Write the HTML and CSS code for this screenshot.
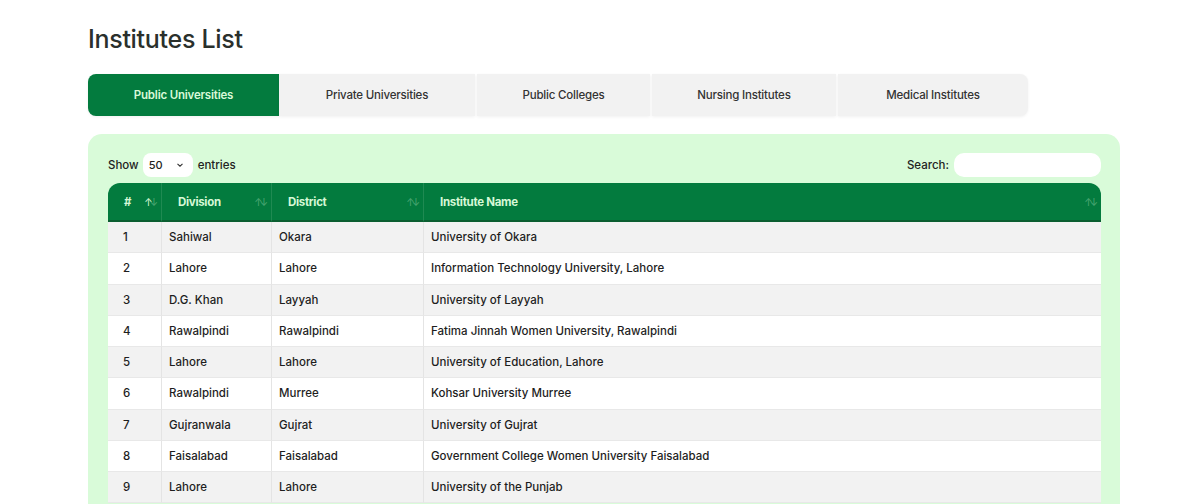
FILE: index.html
```html
<!DOCTYPE html>
<html>
<head>
<meta charset="utf-8">
<link rel="stylesheet" href="styles.css">
</head>
<body>
<div class="page">
  <h1 class="title">Institutes List</h1>
  <div class="tabs">
    <div class="tab active">Public Universities</div>
    <div class="tab">Private Universities</div>
    <div class="tab">Public Colleges</div>
    <div class="tab">Nursing Institutes</div>
    <div class="tab last">Medical Institutes</div>
  </div>
  <div class="panel">
    <div class="controls">
      <div class="length">Show <span class="select">50 <svg width="10" height="10" viewBox="0 0 10 10"><path d="M2.5 3.8 L5 6.2 L7.5 3.8" fill="none" stroke="#333" stroke-width="1.1"/></svg></span> entries</div>
      <div class="search">Search: <span class="input"></span></div>
    </div>
    <table class="grid">
      <thead>
        <tr>
          <th class="c-num">#<span class="sort"><i class="on">↑</i><i>↓</i></span></th>
          <th class="c-div">Division<span class="sort"><i>↑</i><i>↓</i></span></th>
          <th class="c-dis">District<span class="sort"><i>↑</i><i>↓</i></span></th>
          <th class="c-name">Institute Name<span class="sort"><i>↑</i><i>↓</i></span></th>
        </tr>
      </thead>
      <tbody>
        <tr><td>1</td><td>Sahiwal</td><td>Okara</td><td>University of Okara</td></tr>
        <tr><td>2</td><td>Lahore</td><td>Lahore</td><td>Information Technology University, Lahore</td></tr>
        <tr><td>3</td><td>D.G. Khan</td><td>Layyah</td><td>University of Layyah</td></tr>
        <tr><td>4</td><td>Rawalpindi</td><td>Rawalpindi</td><td>Fatima Jinnah Women University, Rawalpindi</td></tr>
        <tr><td>5</td><td>Lahore</td><td>Lahore</td><td>University of Education, Lahore</td></tr>
        <tr><td>6</td><td>Rawalpindi</td><td>Murree</td><td>Kohsar University Murree</td></tr>
        <tr><td>7</td><td>Gujranwala</td><td>Gujrat</td><td>University of Gujrat</td></tr>
        <tr><td>8</td><td>Faisalabad</td><td>Faisalabad</td><td>Government College Women University Faisalabad</td></tr>
        <tr><td>9</td><td>Lahore</td><td>Lahore</td><td>University of the Punjab</td></tr>
      </tbody>
    </table>
  </div>
</div>
</body>
</html>
```
FILE: styles.css
```css
* { box-sizing: border-box; }
html, body { margin: 0; padding: 0; background: #fff; }
body {
  font-family: "Inter", "Liberation Sans", sans-serif;
  color: #222;
  overflow: hidden;
}
.page {
  width: 1032px;
  margin-left: 88px;
  padding-top: 24px;
}
.title {
  margin: 0;
  font-size: 25px;
  line-height: 31px;
  font-weight: 500;
  color: #2a302c;
  letter-spacing: -0.3px;
}
.tabs {
  display: flex;
  margin-top: 19px;
  height: 42px;
  width: 940px;
}
.tab {
  height: 42px;
  display: flex;
  align-items: center;
  justify-content: center;
  background: #f2f2f2;
  font-size: 11.5px;
  font-weight: 500;
  color: #333;
  letter-spacing: -0.2px;
  box-shadow: 0 1px 3px rgba(0,0,0,0.06);
  margin-right: 2px;
}
.tab:nth-child(1) { width: 191px; margin-right: 0; }
.tab:nth-child(2) { width: 196px; }
.tab:nth-child(3) { width: 173px; }
.tab:nth-child(4) { width: 184px; }
.tab:nth-child(5) { width: 190px; }
.tab.active {
  background: #037b3e;
  color: #d8f9d8;
  border-radius: 8px 0 0 8px;
  font-weight: 600;
}
.tab.last { border-radius: 0 8px 8px 0; margin-right: 0; }
.panel {
  margin-top: 18px;
  background: #d9fbd9;
  border-radius: 14px;
  padding: 19px 19px 20px 20px;
  height: 400px;
}
.controls {
  display: flex;
  justify-content: space-between;
  align-items: center;
  height: 24px;
  font-size: 11.5px;
  font-weight: 500;
  color: #222;
}
.length { display: flex; align-items: center; }
.select {
  display: inline-flex;
  align-items: center;
  justify-content: space-between;
  width: 50px;
  height: 24px;
  margin: 0 5px 0 4px;
  padding: 0 8px 0 6px;
  background: #fff;
  border-radius: 8px;
  font-size: 11px;
}
.search { display: flex; align-items: center; }
.input {
  display: inline-block;
  width: 147px;
  height: 24px;
  margin-left: 5px;
  background: #fff;
  border-radius: 10px;
}
.grid {
  margin-top: 6px;
  width: 993px;
  border-collapse: separate;
  border-spacing: 0;
  font-size: 11.5px;
  font-weight: 500;
}
.grid th {
  position: relative;
  background: #037b3e;
  color: #d6f8d6;
  height: 39px;
  text-align: left;
  padding: 0 16px;
  font-weight: 700;
  letter-spacing: -0.3px;
  border-bottom: 2px solid #0b5e31;
  border-left: 1px solid #1f8a52;
}
.grid th:first-child { border-left: none; border-top-left-radius: 12px; }
.grid th:last-child { border-top-right-radius: 12px; }
.c-num { width: 53px; }
.c-div { width: 110px; }
.c-dis { width: 152px; }
.sort {
  position: absolute;
  right: 6px;
  top: 13px;
  font-size: 10px;
  letter-spacing: -3px;
  font-weight: 400;
}
.sort i { font-style: normal; color: #4aa672; }
.sort i.on { color: #d6f8d6; }
.grid td {
  height: 31.25px;
  padding: 0 7px;
  color: #1e1e1e;
  border-left: 1px solid #e4e4e4;
  border-bottom: 1px solid #e8e8e8;
  background: #fff;
}
.grid td:first-child { border-left: none; padding-left: 15px; }
.grid tbody tr:nth-child(odd) td { background: #f2f2f2; }
```
